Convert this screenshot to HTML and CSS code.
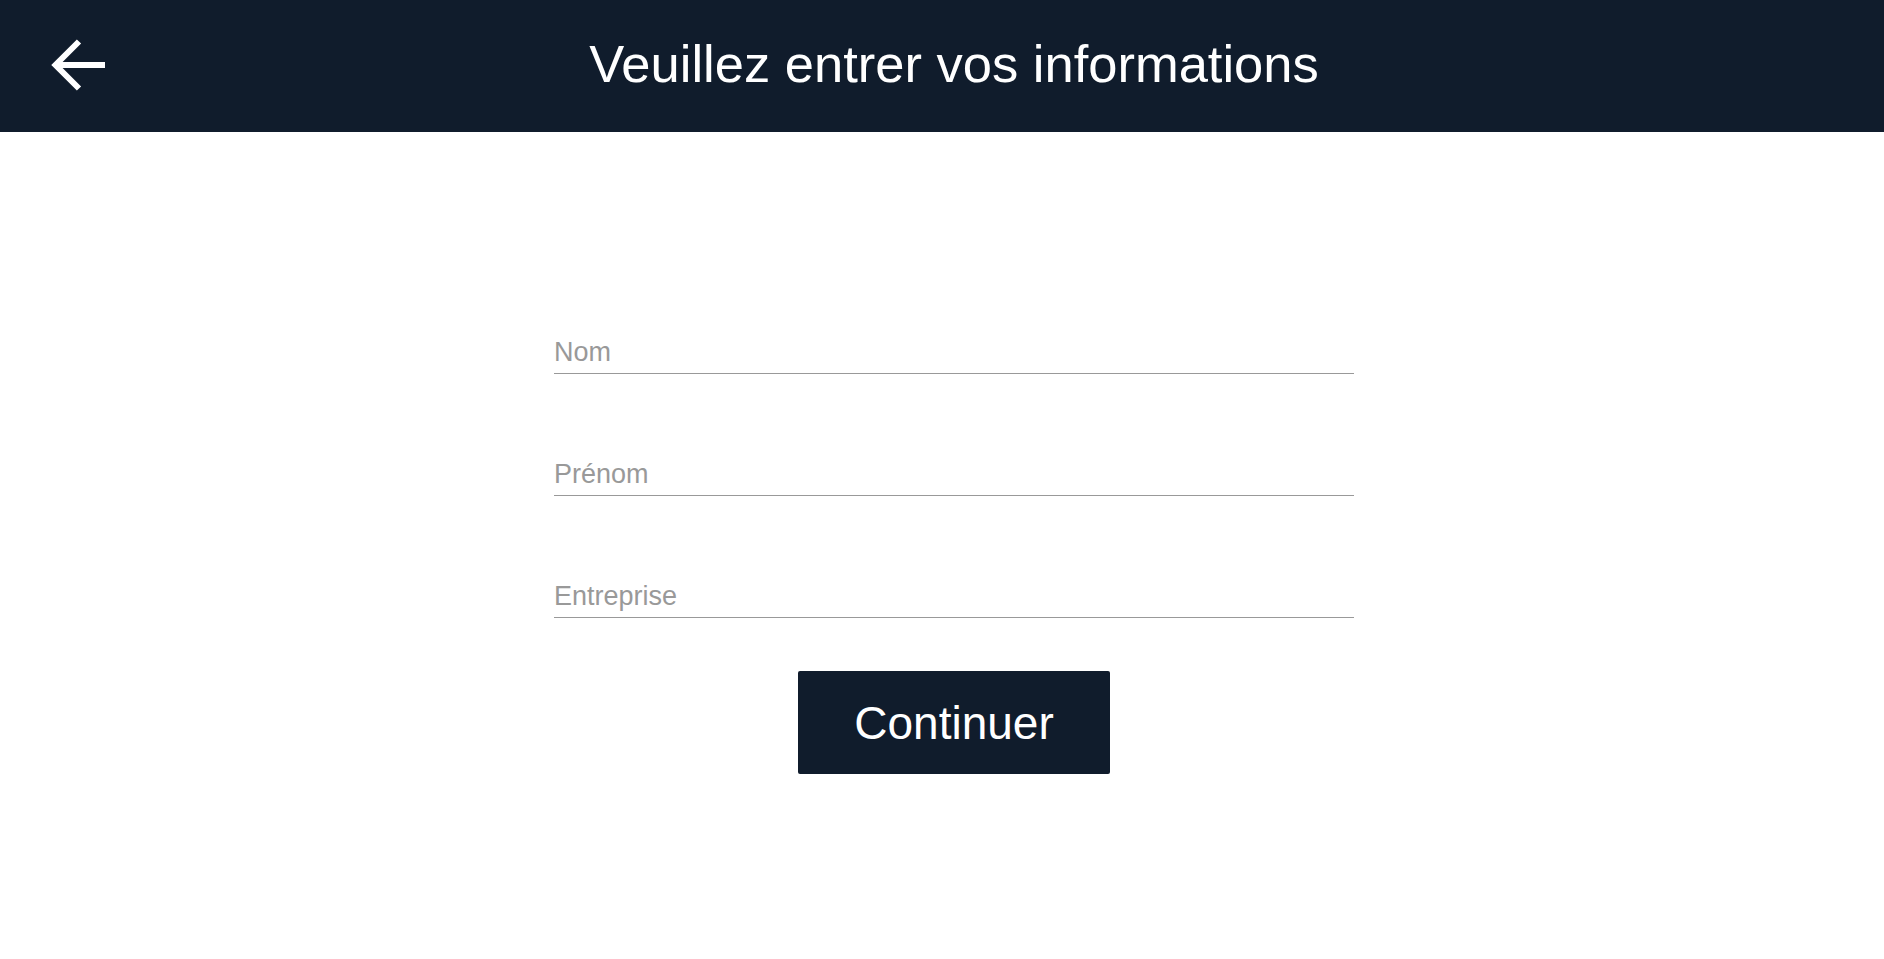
FILE: index.html
```html
<!DOCTYPE html>
<html lang="fr">
<head>
    <meta charset="UTF-8">
    <meta name="viewport" content="width=device-width, initial-scale=1.0">
    <title>Vos informations</title>
    <link rel="stylesheet" href="styles.css">
</head>
<body>
    <header class="topbar">
        <a href="#" class="back-btn" aria-label="Retour">
            <svg width="54" height="54" viewBox="0 0 54 54">
                <path d="M54 27H4.5M28 3.5L4.5 27L28 50.5" fill="none" stroke="#fff" stroke-width="6"/>
            </svg>
        </a>
        <h1 class="topbar-title">Veuillez entrer vos informations</h1>
    </header>

    <main class="content">
        <form id="infoForm" class="info-form">
            <input type="text" id="nom" name="nom" placeholder="Nom">
            <input type="text" id="prenom" name="prenom" placeholder="Prénom">
            <input type="text" id="entreprise" name="entreprise" placeholder="Entreprise">
            <button type="button">Continuer</button>
        </form>
    </main>
</body>
</html>
```

FILE: styles.css
```css
body {
    font-family: "Liberation Sans", Arial, sans-serif;
    margin: 0;
    background-color: #fff;
}
.topbar {
    display: flex;
    align-items: center;
    height: 132px;
    padding: 0 81px 0 51px;
    background-color: #101c2c;
}
.back-btn {
    display: flex;
    width: 54px;
    height: 54px;
    margin-top: -3px;
}
.topbar-title {
    flex: 1;
    margin: -6px 0 0;
    color: #fff;
    font-size: 52.5px;
    font-weight: normal;
    text-align: center;
}
.content {
    display: flex;
    justify-content: center;
    padding: 200px 0 0 24px;
}
.info-form {
    display: flex;
    flex-direction: column;
    align-items: center;
    width: 800px;
}
.info-form input {
    width: 100%;
    padding: 5px 0;
    margin-bottom: 80px;
    border: none;
    border-bottom: 1px solid #999;
    font-family: inherit;
    font-size: 27px;
    color: #333;
    outline: none;
    box-sizing: border-box;
}
.info-form input:last-of-type {
    margin-bottom: 53px;
}
.info-form input::placeholder {
    color: #999;
}
.info-form button {
    width: 312px;
    height: 103px;
    background-color: #101c2c;
    color: white;
    border: none;
    border-radius: 2px;
    font-family: inherit;
    font-size: 46px;
    cursor: pointer;
}
```
